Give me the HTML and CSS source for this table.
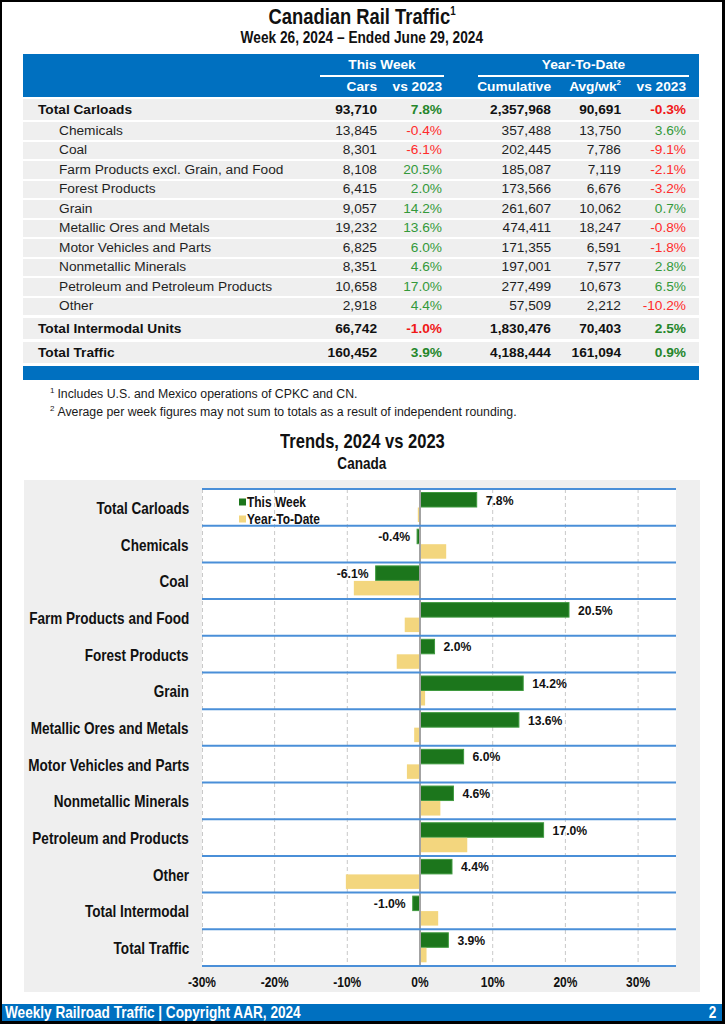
FILE: index.html
```html
<!DOCTYPE html>
<html lang="en">
<head>
<meta charset="utf-8">
<title>Canadian Rail Traffic</title>
<link rel="stylesheet" href="styles.css">
</head>
<body>
<div class="page">
  <header class="doc-head">
    <h1 class="doc-title"><span class="cond">Canadian Rail Traffic<sup>1</sup></span></h1>
    <p class="doc-sub"><span class="cond">Week 26, 2024 – Ended June 29, 2024</span></p>
  </header>

  <div class="traffic">
    <div class="thead">
      <div class="grp grp-week">This Week</div>
      <div class="grp grp-ytd">Year-To-Date</div>
      <div class="hc c-cars">Cars</div>
      <div class="hc c-vs">vs 2023</div>
      <div class="hc c-cum">Cumulative</div>
      <div class="hc c-avg">Avg/wk<sup>2</sup></div>
      <div class="hc c-yvs">vs 2023</div>
    </div>
    <div class="tbody">
      <div class="row total first"><span class="lab">Total Carloads</span><span>93,710</span><span class="up">7.8%</span><span>2,357,968</span><span>90,691</span><span class="down">-0.3%</span></div>
      <div class="row sub"><span class="lab">Chemicals</span><span>13,845</span><span class="down">-0.4%</span><span>357,488</span><span>13,750</span><span class="up">3.6%</span></div>
      <div class="row sub"><span class="lab">Coal</span><span>8,301</span><span class="down">-6.1%</span><span>202,445</span><span>7,786</span><span class="down">-9.1%</span></div>
      <div class="row sub"><span class="lab">Farm Products excl. Grain, and Food</span><span>8,108</span><span class="up">20.5%</span><span>185,087</span><span>7,119</span><span class="down">-2.1%</span></div>
      <div class="row sub"><span class="lab">Forest Products</span><span>6,415</span><span class="up">2.0%</span><span>173,566</span><span>6,676</span><span class="down">-3.2%</span></div>
      <div class="row sub"><span class="lab">Grain</span><span>9,057</span><span class="up">14.2%</span><span>261,607</span><span>10,062</span><span class="up">0.7%</span></div>
      <div class="row sub"><span class="lab">Metallic Ores and Metals</span><span>19,232</span><span class="up">13.6%</span><span>474,411</span><span>18,247</span><span class="down">-0.8%</span></div>
      <div class="row sub"><span class="lab">Motor Vehicles and Parts</span><span>6,825</span><span class="up">6.0%</span><span>171,355</span><span>6,591</span><span class="down">-1.8%</span></div>
      <div class="row sub"><span class="lab">Nonmetallic Minerals</span><span>8,351</span><span class="up">4.6%</span><span>197,001</span><span>7,577</span><span class="up">2.8%</span></div>
      <div class="row sub"><span class="lab">Petroleum and Petroleum Products</span><span>10,658</span><span class="up">17.0%</span><span>277,499</span><span>10,673</span><span class="up">6.5%</span></div>
      <div class="row sub"><span class="lab">Other</span><span>2,918</span><span class="up">4.4%</span><span>57,509</span><span>2,212</span><span class="down">-10.2%</span></div>
      <div class="row total"><span class="lab">Total Intermodal Units</span><span>66,742</span><span class="down">-1.0%</span><span>1,830,476</span><span>70,403</span><span class="up">2.5%</span></div>
      <div class="row total"><span class="lab">Total Traffic</span><span>160,452</span><span class="up">3.9%</span><span>4,188,444</span><span>161,094</span><span class="up">0.9%</span></div>
    </div>
    <div class="tend"></div>
  </div>

  <div class="notes">
    <p class="note"><sup>1</sup>Includes U.S. and Mexico operations of CPKC and CN.</p>
    <p class="note"><sup>2</sup>Average per week figures may not sum to totals as a result of independent rounding.</p>
  </div>

  <h2 class="trends-title"><span class="cond">Trends, 2024 vs 2023</span></h2>
  <h3 class="trends-sub"><span class="cond">Canada</span></h3>

  <div class="panel">
    <div class="cats">
      <div class="cat"><span>Total Carloads</span></div>
      <div class="cat"><span>Chemicals</span></div>
      <div class="cat"><span>Coal</span></div>
      <div class="cat"><span>Farm Products and Food</span></div>
      <div class="cat"><span>Forest Products</span></div>
      <div class="cat"><span>Grain</span></div>
      <div class="cat"><span>Metallic Ores and Metals</span></div>
      <div class="cat"><span>Motor Vehicles and Parts</span></div>
      <div class="cat"><span>Nonmetallic Minerals</span></div>
      <div class="cat"><span>Petroleum and Products</span></div>
      <div class="cat"><span>Other</span></div>
      <div class="cat"><span>Total Intermodal</span></div>
      <div class="cat"><span>Total Traffic</span></div>
    </div>
    <div class="plot">
      <svg class="chart" width="474" height="503" viewBox="0 0 474 503">
        <rect x="0" y="0" width="474" height="477" fill="#ffffff"/>
        <g class="grid" stroke="#c9c9c9" stroke-width="1" stroke-dasharray="4 3">
          <line x1="0.5" y1="0" x2="0.5" y2="477"/>
          <line x1="72.6" y1="0" x2="72.6" y2="477"/>
          <line x1="145.3" y1="0" x2="145.3" y2="477"/>
          <line x1="290.7" y1="0" x2="290.7" y2="477"/>
          <line x1="363.4" y1="0" x2="363.4" y2="477"/>
          <line x1="436.1" y1="0" x2="436.1" y2="477"/>
        </g>
        <g class="bars-week" fill="#1c761c" stroke="#3f9a3f" stroke-width="1">
          <rect x="218" y="3.5" width="56.7" height="14.5"/>
          <rect x="215.1" y="40.2" width="2.9" height="14.5"/>
          <rect x="173.65" y="76.9" width="44.35" height="14.5"/>
          <rect x="218" y="113.6" width="149" height="14.5"/>
          <rect x="218" y="150.3" width="14.54" height="14.5"/>
          <rect x="218" y="187" width="103.2" height="14.5"/>
          <rect x="218" y="223.65" width="98.9" height="14.5"/>
          <rect x="218" y="260.35" width="43.62" height="14.5"/>
          <rect x="218" y="297.05" width="33.44" height="14.5"/>
          <rect x="218" y="333.75" width="123.59" height="14.5"/>
          <rect x="218" y="370.4" width="31.99" height="14.5"/>
          <rect x="210.73" y="407.1" width="7.27" height="14.5"/>
          <rect x="218" y="443.8" width="28.35" height="14.5"/>
        </g>
        <g class="bars-ytd" fill="#f3d67e">
          <rect x="215.8" y="18.5" width="2.2" height="14.5"/>
          <rect x="218" y="55.2" width="26.2" height="14.5"/>
          <rect x="151.84" y="91.9" width="66.16" height="14.5"/>
          <rect x="202.73" y="128.6" width="15.27" height="14.5"/>
          <rect x="194.74" y="165.3" width="23.26" height="14.5"/>
          <rect x="218" y="202" width="5.09" height="14.5"/>
          <rect x="212.18" y="238.65" width="5.82" height="14.5"/>
          <rect x="204.91" y="275.35" width="13.09" height="14.5"/>
          <rect x="218" y="312.05" width="20.36" height="14.5"/>
          <rect x="218" y="348.75" width="47.26" height="14.5"/>
          <rect x="143.85" y="385.4" width="74.15" height="14.5"/>
          <rect x="218" y="422.1" width="18.18" height="14.5"/>
          <rect x="218" y="458.8" width="6.54" height="14.5"/>
        </g>
        <line class="zero" x1="218" y1="0" x2="218" y2="477" stroke="#a3a3a3" stroke-width="2"/>
        <g class="rules" stroke="#4a8fd8" stroke-width="2">
          <line x1="0" y1="0" x2="474" y2="0"/>
          <line x1="0" y1="36.69" x2="474" y2="36.69"/>
          <line x1="0" y1="73.38" x2="474" y2="73.38"/>
          <line x1="0" y1="110.08" x2="474" y2="110.08"/>
          <line x1="0" y1="146.77" x2="474" y2="146.77"/>
          <line x1="0" y1="183.46" x2="474" y2="183.46"/>
          <line x1="0" y1="220.15" x2="474" y2="220.15"/>
          <line x1="0" y1="256.85" x2="474" y2="256.85"/>
          <line x1="0" y1="293.54" x2="474" y2="293.54"/>
          <line x1="0" y1="330.23" x2="474" y2="330.23"/>
          <line x1="0" y1="366.92" x2="474" y2="366.92"/>
          <line x1="0" y1="403.62" x2="474" y2="403.62"/>
          <line x1="0" y1="440.31" x2="474" y2="440.31"/>
          <line x1="0" y1="477" x2="474" y2="477"/>
        </g>
        <g class="legend">
          <rect x="37" y="9.5" width="7" height="7" fill="#1c761c"/>
          <text class="leg-text" transform="translate(45 18) scale(0.82 1)">This Week</text>
          <rect x="37" y="26.5" width="7" height="7" fill="#f3d67e"/>
          <text class="leg-text" transform="translate(45 35) scale(0.82 1)">Year-To-Date</text>
        </g>
        <g class="vals">
          <text x="283.7" y="15.5">7.8%</text>
          <text x="208.1" y="52.2" text-anchor="end">-0.4%</text>
          <text x="166.6" y="88.9" text-anchor="end">-6.1%</text>
          <text x="376" y="125.6">20.5%</text>
          <text x="241.5" y="162.3">2.0%</text>
          <text x="330.2" y="199">14.2%</text>
          <text x="325.9" y="235.7">13.6%</text>
          <text x="270.6" y="272.4">6.0%</text>
          <text x="260.4" y="309">4.6%</text>
          <text x="350.6" y="345.7">17.0%</text>
          <text x="259" y="382.4">4.4%</text>
          <text x="203.7" y="419.1" text-anchor="end">-1.0%</text>
          <text x="255.4" y="455.8">3.9%</text>
        </g>
        <g class="axis" text-anchor="middle">
          <text transform="translate(0 497.5) scale(0.82 1)">-30%</text>
          <text transform="translate(72.7 497.5) scale(0.82 1)">-20%</text>
          <text transform="translate(145.3 497.5) scale(0.82 1)">-10%</text>
          <text transform="translate(218 497.5) scale(0.82 1)">0%</text>
          <text transform="translate(290.7 497.5) scale(0.82 1)">10%</text>
          <text transform="translate(363.4 497.5) scale(0.82 1)">20%</text>
          <text transform="translate(436.1 497.5) scale(0.82 1)">30%</text>
        </g>
      </svg>
    </div>
  </div>

  <footer class="foot">
    <span class="foot-l">Weekly Railroad Traffic | Copyright AAR, 2024</span>
    <span class="foot-r">2</span>
  </footer>
</div>
</body>
</html>
```
FILE: styles.css
```css
* { box-sizing: border-box; }
html, body { margin: 0; padding: 0; background: #fff; }
body {
  font-family: "Liberation Sans", Arial, Helvetica, sans-serif;
  color: #1a1a1a;
}
.page {
  width: 725px;
  height: 1024px;
  border-style: solid;
  border-color: #000;
  border-width: 2px 3px 3px 2px;
  display: flex;
  flex-direction: column;
  background: #fff;
}

/* condensed look (Helvetica Condensed stand-in) */
.cond {
  display: inline-block;
  white-space: nowrap;
  transform: scaleX(0.82);
  transform-origin: center center;
}

/* title */
.doc-head { text-align: center; padding-top: 3px; }
.doc-title {
  margin: 0;
  font-size: 22.4px;
  line-height: 24px;
  font-weight: bold;
  color: #111;
}
.doc-title sup { font-size: 12px; line-height: 0; vertical-align: 9px; }
.doc-sub {
  margin: 0;
  font-size: 16.7px;
  line-height: 17px;
  font-weight: bold;
  color: #111;
}

/* table */
.traffic { margin: 8px 23px 0 21px; }
.thead, .row {
  display: grid;
  grid-template-columns: 297px 57px 65px 109px 70px 65px 13px;
}
.thead {
  background: #0070c0;
  color: #fff;
  font-weight: bold;
  font-size: 13.7px;
  grid-template-rows: 23px 20px;
}
.grp {
  grid-row: 1;
  text-align: center;
  border-bottom: 2px solid #fff;
  line-height: 20px;
  padding-top: 1px;
}
.grp-week { grid-column: 2 / 4; margin-right: -2px; }
.grp-ytd { grid-column: 4 / 7; margin-left: 36px; margin-right: -3px; }
.hc { grid-row: 2; text-align: right; line-height: 20px; }
.hc sup { font-size: 8px; line-height: 0; vertical-align: 6px; }
.c-cars { grid-column: 2; }
.c-vs { grid-column: 3; }
.c-cum { grid-column: 4; }
.c-avg { grid-column: 5; }
.c-yvs { grid-column: 6; }

.tbody { display: flex; flex-direction: column; }
.row {
  background: #efefef;
  height: 17.5px;
  margin-top: 2px;
  align-items: center;
  font-size: 13.7px;
  color: #1f1f1f;
}
.row > span { text-align: right; white-space: nowrap; }
.row > .lab { text-align: left; padding-left: 36px; }
.row.total { height: 21px; margin-top: 3px; font-weight: bold; color: #111; }
.row.total.first { margin-top: 2px; }
.row.total > .lab { padding-left: 15px; }
.total + .sub { margin-top: 2px; }
.row.sub > span { margin-top: -1px; }
.up { color: #33993a; }
.down { color: #ff2b2b; }
.total .up { color: #25862b; }
.total .down { color: #f01818; }
.tend { height: 14px; margin-top: 3px; background: #0070c0; }

/* notes */
.notes { margin: 5px 0 0 48px; }
.note {
  margin: 0;
  font-size: 12.3px;
  line-height: 18px;
  color: #1a1a1a;
}
.note sup { font-size: 8px; line-height: 0; vertical-align: 5px; margin-right: 3px; }

/* trends */
.trends-title {
  margin: 10px 0 0;
  text-align: center;
  font-size: 20.2px;
  line-height: 20px;
  font-weight: bold;
  color: #111;
}
.trends-sub {
  margin: 3px 0 0;
  text-align: center;
  font-size: 16.5px;
  line-height: 18px;
  font-weight: bold;
  color: #111;
}
.panel {
  margin: 8px 0 0 22px;
  width: 676px;
  background: #efefef;
  padding-top: 9px;
  display: grid;
  grid-template-columns: 178px 474px;
  align-items: start;
}
.cats {
  width: 178px;
  height: 477px;
  margin-top: 1px;
  display: grid;
  grid-template-columns: minmax(0, 1fr);
  grid-template-rows: repeat(13, 1fr);
}
.cat {
  min-width: 0;
  display: flex;
  align-items: center;
  justify-content: flex-end;
  padding-right: 13px;
  font-size: 16.5px;
  font-weight: bold;
  color: #111;
  white-space: nowrap;
}
.cat > span {
  flex: none;
  display: inline-block;
  transform: scaleX(0.82);
  transform-origin: right center;
}
.chart { display: block; overflow: visible; }
.leg-text { font-size: 14.6px; font-weight: bold; fill: #111; }
.vals text { font-size: 12.2px; font-weight: bold; fill: #111; }
.axis text { font-size: 14.6px; font-weight: bold; fill: #111; }

/* footer */
.foot {
  margin-top: auto;
  height: 17px;
  background: #0070c0;
  color: #fff;
  font-weight: bold;
  font-size: 16.6px;
  line-height: 17px;
  display: flex;
  justify-content: space-between;
  padding: 0 6px 0 3px;
}
.foot-l, .foot-r { display: inline-block; white-space: nowrap; transform: scaleX(0.82); }
.foot-l { transform-origin: left center; }
.foot-r { transform-origin: right center; }
```
